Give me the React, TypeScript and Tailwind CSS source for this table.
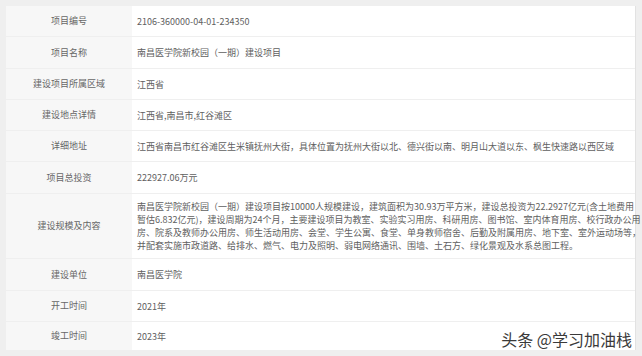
const rows: { label: string; value: string[]; h: string }[] = [
  { label: "项目编号", value: ["2106-360000-04-01-234350"], h: "h-[31px]" },
  { label: "项目名称", value: ["南昌医学院新校园（一期）建设项目"], h: "h-[32px]" },
  { label: "建设项目所属区域", value: ["江西省"], h: "h-[31px]" },
  { label: "建设地点详情", value: ["江西省,南昌市,红谷滩区"], h: "h-[31px]" },
  {
    label: "详细地址",
    value: ["江西省南昌市红谷滩区生米镇抚州大街，具体位置为抚州大街以北、德兴街以南、明月山大道以东、枫生快速路以西区域"],
    h: "h-[31px]",
  },
  { label: "项目总投资", value: ["222927.06万元"], h: "h-[32px]" },
  {
    label: "建设规模及内容",
    value: [
      "南昌医学院新校园（一期）建设项目按10000人规模建设，建筑面积为30.93万平方米，建设总投资为22.2927亿元(含土地费用",
      "暂估6.832亿元)，建设周期为24个月，主要建设项目为教室、实验实习用房、科研用房、图书馆、室内体育用房、校行政办公用",
      "房、院系及教师办公用房、师生活动用房、会堂、学生公寓、食堂、单身教师宿舍、后勤及附属用房、地下室、室外运动场等，",
      "并配套实施市政道路、给排水、燃气、电力及照明、弱电网络通讯、围墙、土石方、绿化景观及水系总图工程。",
    ],
    h: "h-[65px]",
  },
  { label: "建设单位", value: ["南昌医学院"], h: "h-[32px]" },
  { label: "开工时间", value: ["2021年"], h: "h-[31px]" },
  { label: "竣工时间", value: ["2023年"], h: "h-[28px]" },
]

export default function App() {
  return (
    <div
      className="relative w-[642px] h-[356px] overflow-hidden bg-[#efefef] pt-[6px] pl-[6px]"
      style={{ fontFamily: '"Noto Sans CJK SC", "Noto Sans", sans-serif' }}
    >
      <div className="w-[630px] border-r border-[#e2e2e2] bg-white">
        {rows.map((r, i) => (
          <div
            key={r.label}
            className={`flex ${r.h} ${i < rows.length - 1 ? "border-b border-[#efefef]" : ""}`}
          >
            <div className="w-[126px] shrink-0 flex items-center justify-center bg-[#f7f7f7] text-[9px] text-[#666]">
              {r.label}
            </div>
            <div className="flex-1 flex flex-col justify-center pl-[5px] text-[9px] leading-[13px] text-[#606060]">
              {r.value.map((line) => (
                <span key={line} className="block whitespace-nowrap">
                  {line}
                </span>
              ))}
            </div>
          </div>
        ))}
      </div>
      <div className="absolute right-[10px] bottom-[7px] text-[16px] leading-[20px] text-[#3a3a3a] [text-shadow:0_0_2px_#fff]">
        头条 @学习加油栈
      </div>
    </div>
  )
}
